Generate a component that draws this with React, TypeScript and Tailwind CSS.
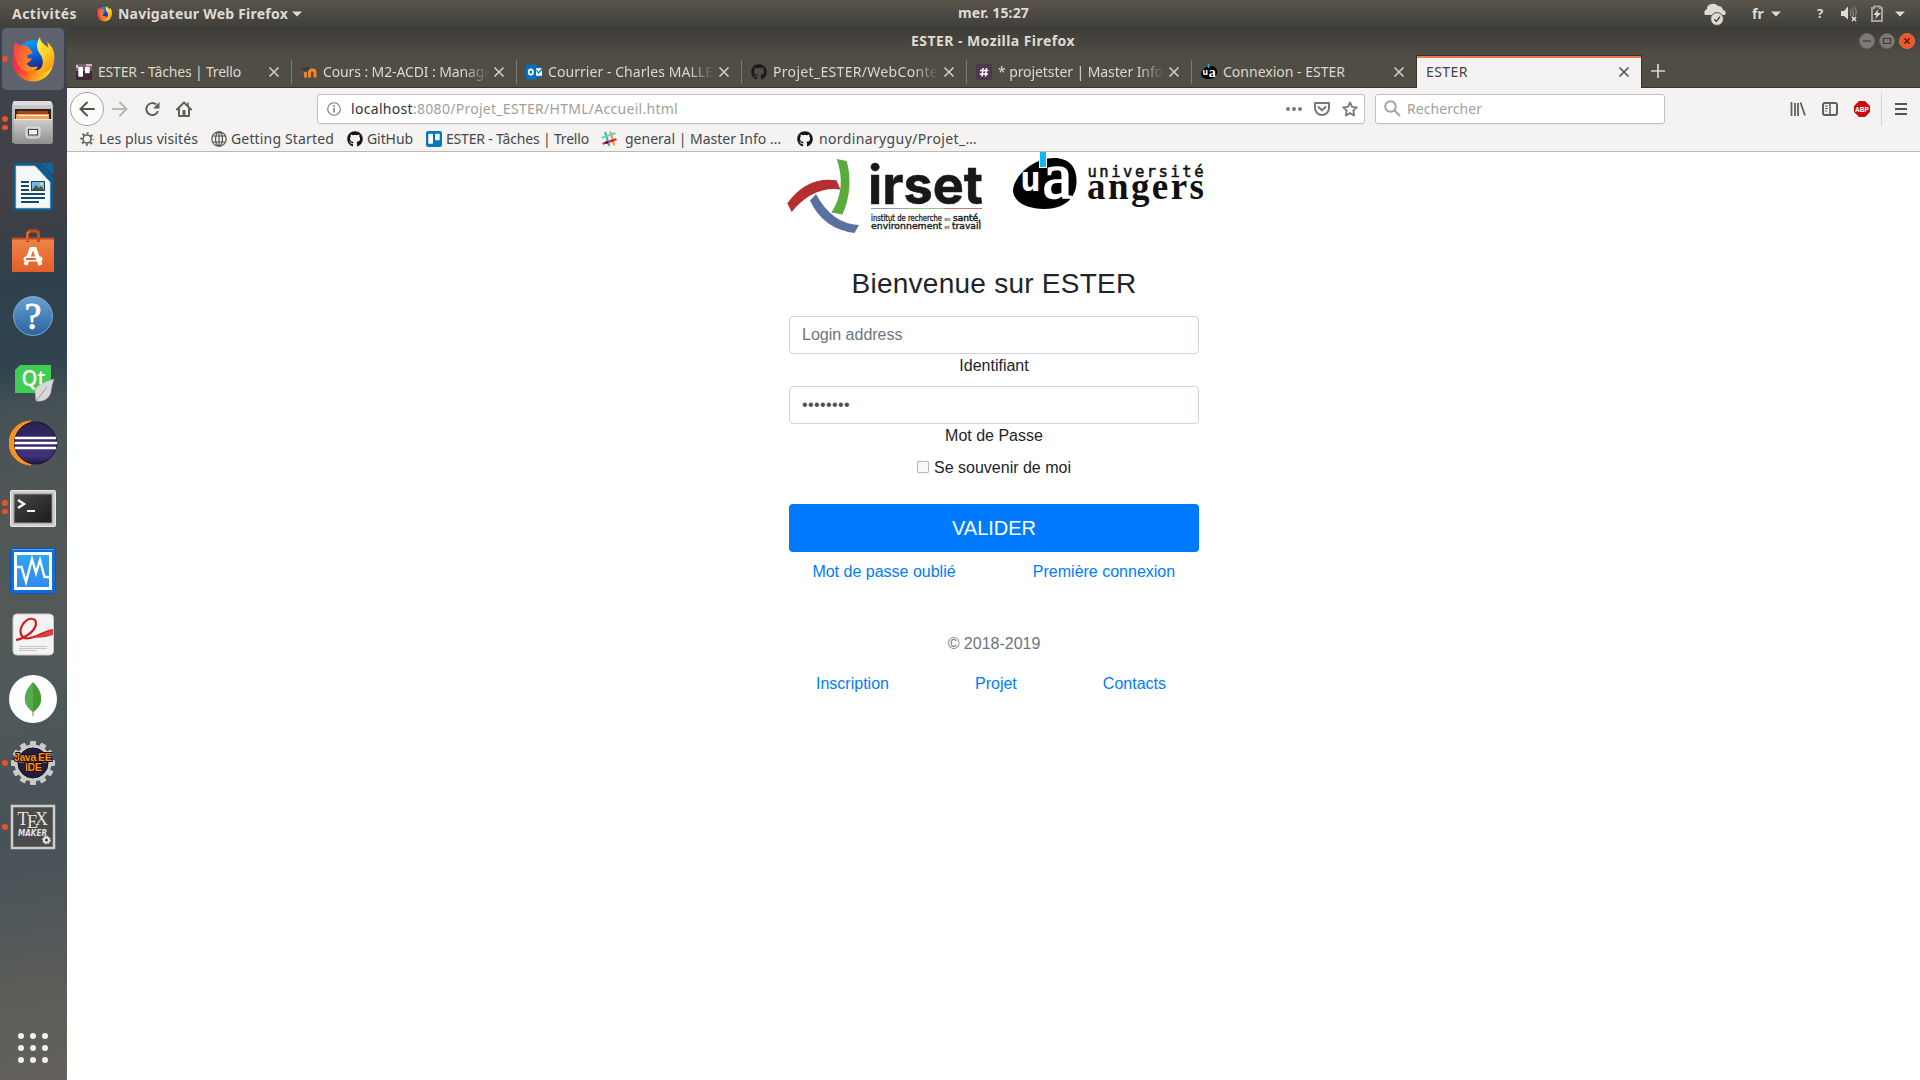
import { useLayoutEffect, useRef, useState, type ReactNode } from "react";
import { FaGithub } from "react-icons/fa";

/** Single line of text whose tracking is adjusted so that it spans `w` pixels. */
function Fit({ w, children, className = "" }: { w: number; children: string; className?: string }) {
  const ref = useRef<HTMLSpanElement>(null);
  const [spacing, setSpacing] = useState(0);
  useLayoutEffect(() => {
    const el = ref.current;
    if (el) setSpacing((w - el.getBoundingClientRect().width) / children.length);
  }, [w, children]);
  return (
    <span ref={ref} className={"inline-block shrink-0 whitespace-pre " + className} style={{ letterSpacing: spacing }}>
      {children}
    </span>
  );
}

function FirefoxLogo({ size }: { size: number }) {
  return (
    <svg width={size} height={size} viewBox="0 0 48 48" className="shrink-0">
      <defs>
        <linearGradient id="fxBody" x1="0" y1="0.2" x2="1" y2="0.7">
          <stop offset="0" stopColor="#f0244f" />
          <stop offset="0.3" stopColor="#fb2f4b" />
          <stop offset="0.6" stopColor="#ff7a1c" />
          <stop offset="1" stopColor="#ffe226" />
        </linearGradient>
        <linearGradient id="fxGlobe" x1="0.3" y1="0" x2="0.6" y2="1">
          <stop offset="0" stopColor="#00a8f4" />
          <stop offset="0.5" stopColor="#0a63e0" />
          <stop offset="1" stopColor="#1b1f7a" />
        </linearGradient>
        <linearGradient id="fxTail" x1="0" y1="0" x2="0.5" y2="1">
          <stop offset="0" stopColor="#fff44f" />
          <stop offset="0.5" stopColor="#ffd62a" />
          <stop offset="1" stopColor="#ff9a16" />
        </linearGradient>
        <linearGradient id="fxHead" x1="0" y1="0" x2="1" y2="0.3">
          <stop offset="0" stopColor="#fb3a44" />
          <stop offset="1" stopColor="#ff9a1c" />
        </linearGradient>
      </defs>
      <circle cx="24" cy="26" r="20.500" fill="url(#fxBody)" />
      <path d="M10 12C15 6 23 4 31 6C39 11 39 25 34 32C29 37 18 37 14 30Z" fill="url(#fxGlobe)" />
      <path d="M7 6C8 10 10 11 13 11C17 10 19 11 20 13L24 18C22 19 19 19 18 21C19 24 21 24 23 23C21 28 18 27 18 29C21 34 26 31 29 32C25 39 14 37 9 30C4 20 3 14 7 6Z" fill="url(#fxHead)" />
      <path d="M31 2C27 8 27 14 31 19C36 26 34 33 28 37C34 40 43 36 45 27C47 17 43 11 38 7C39 10 40 12 39 13C34 9 31 6 31 2Z" fill="url(#fxTail)" />
    </svg>
  );
}

function Caret({ className = "" }: { className?: string }) {
  return (
    <svg width="10" height="6" viewBox="0 0 10 6" className={"shrink-0 " + className}>
      <path d="M0 .5h10L5 5.500z" fill="#dfdbd2" />
    </svg>
  );
}

function TopPanel() {
  return (
    <header className="flex h-[27px] shrink-0 items-center bg-linear-to-b from-[#59554c] to-[#403f3a] text-sm font-bold leading-none text-[#dfdbd2]">
      <div className="flex w-[940px] items-center pl-3">
        <Fit w={65}>Activités</Fit>
        <div className="ml-[19px] flex">
          <FirefoxLogo size={17} />
        </div>
        <Fit w={170} className="ml-[5px]">Navigateur Web Firefox</Fit>
        <Caret className="ml-1" />
      </div>
      <Fit w={71} className="ml-[18px] -translate-y-px">mer. 15:27</Fit>
      <div className="flex flex-1 items-center">
        <svg width="24" height="24" viewBox="0 0 24 24" className="ml-[674px] shrink-0">
          <path d="M2 13a4 4 0 0 1 2-6 6 5 0 0 1 11-3 5 5 0 0 1 5 4 3 3 0 0 1 2 5z" fill="#dfdbd2" />
          <circle cx="14" cy="17" r="6.400" fill="#dfdbd2" stroke="#504d45" strokeWidth="1" />
          <path d="m11.300 17.300 2 2.100 3.700-4.600" fill="none" stroke="#46443e" strokeWidth="1.400" />
        </svg>
        <Fit w={12} className="ml-[25px]">fr</Fit>
        <Caret className="ml-[7px]" />
        <span className="ml-[36px] w-2 text-[13px]">?</span>
        <svg width="18" height="18" viewBox="0 0 18 18" className="ml-[15px] shrink-0">
          <path d="M1 6h3l4-4.500v13L4 11H1z" fill="#dfdbd2" />
          <path d="M10 5q2 3 0 6M12 3.500q3 5 0 9M14 1.500q4 6 1 9" fill="none" stroke="#85827a" strokeWidth="1.300" />
          <path d="m12 12 4 4m0-4-4 4" stroke="#dfdbd2" strokeWidth="1.700" />
        </svg>
        <svg width="14" height="18" viewBox="0 0 14 18" className="ml-[12px] shrink-0">
          <path d="M4 3V1.500h6V3h2v13H2V3z" fill="none" stroke="#a5a299" strokeWidth="2" />
          <path d="M8.500 4 3.500 10h3L5 14l6-6H7.500z" fill="#dfdbd2" />
        </svg>
        <Caret className="ml-[11px]" />
      </div>
    </header>
  );
}

const icon = "h-12 w-12 shrink-0";

function FilesIcon() {
  return (
    <svg viewBox="0 0 48 48" className={icon}>
      <defs>
        <linearGradient id="cab" x1="0" y1="0" x2="0" y2="1">
          <stop offset="0" stopColor="#cfcfcf" />
          <stop offset="1" stopColor="#8e8e8e" />
        </linearGradient>
      </defs>
      <path d="M5 2h36q2 0 3 5v37H3V7q1-5 2-5z" fill="url(#cab)" />
      <path d="M5 2h36l2 4H4z" fill="#dedede" />
      <path d="M6 10h36v10H6z" fill="#292423" />
      <path d="M8 12h31v8H8z" fill="#a84218" />
      <path d="M7 15h33v5H7z" fill="#f0a45a" />
      <path d="M9 16.500h30" stroke="#fff0d8" />
      <path d="M5 20h38v25H5z" fill="url(#cab)" />
      <path d="M5 20.500h38" stroke="#e6e6e6" />
      <rect x="17" y="28" width="14" height="11" rx="2.500" fill="#c5c5c5" stroke="#eee" strokeWidth=".8" />
      <rect x="19.500" y="30.500" width="9" height="5.500" fill="#eee" stroke="#454545" />
    </svg>
  );
}

function WriterIcon() {
  return (
    <svg viewBox="0 0 48 48" className={icon}>
      <path d="M6 0h25l13 14v32q0 2-2 2H6q-2 0-2-2V2q0-2 2-2z" fill="#0c5c90" />
      <path d="M7 3h19l15 16v26H7z" fill="#f7f7f7" stroke="#c5cdd2" strokeWidth=".7" />
      <path d="M32 0h10q2 0 2 2v10z" fill="#0e63a0" />
      <path d="M12 19h8M12 23h8M12 27h8M12 31h24M12 35h24M12 39h18" stroke="#12496f" strokeWidth="2" />
      <path d="M22 18h14v10H22z" fill="#12496f" />
      <path d="M23 19h12v8H23z" fill="#6fb9e6" />
      <path d="m23 27 4-5 3 3 2-2 3 4z" fill="#4b5837" />
      <circle cx="32.500" cy="21" r="1.400" fill="#ffd75a" />
    </svg>
  );
}

function SoftwareIcon() {
  return (
    <svg viewBox="0 0 48 48" className={icon}>
      <defs>
        <linearGradient id="bag" x1="0" y1="0" x2="0" y2="1">
          <stop offset="0" stopColor="#f0844a" />
          <stop offset="1" stopColor="#e35f28" />
        </linearGradient>
      </defs>
      <path d="M3 11h42v34H3z" fill="url(#bag)" />
      <path d="M3 10.500h42v2H3z" fill="#b84e20" />
      <path d="M18.500 15V7q0-3 3-3h5q3 0 3 3v8" fill="none" stroke="#c34c1d" strokeWidth="3" />
      <path d="M18 14V7q0-2 3-2" fill="none" stroke="#ef844c" strokeWidth="1" />
      <path d="M16.500 38 22.300 22h3.400l5.800 16" fill="none" stroke="#fff" strokeWidth="4" />
      <rect x="14.500" y="29.500" width="19" height="5" rx="2.500" fill="#fff" />
      <path d="M17 31h10v2H17z" fill="#e8662b" />
    </svg>
  );
}

function HelpIcon() {
  return (
    <svg viewBox="0 0 48 48" className={icon}>
      <defs>
        <linearGradient id="help" x1="0" y1="0" x2="0" y2="1">
          <stop offset="0" stopColor="#6aa1d2" />
          <stop offset="1" stopColor="#2763a0" />
        </linearGradient>
      </defs>
      <circle cx="24" cy="25" r="19.400" fill="url(#help)" stroke="#7fadd4" />
      <text x="24" y="38" textAnchor="middle" fontFamily="Liberation Serif" fontSize="38" fill="#fff" stroke="#fff" strokeWidth=".8">?</text>
    </svg>
  );
}

function QtIcon() {
  return (
    <svg viewBox="0 0 48 48" className={icon}>
      <path d="M11 10h31v28H6V15z" fill="#41cd52" />
      <text x="12.500" y="31" fontFamily="Open Sans" fontSize="21" fontWeight="600" fill="#fff" textLength="24" lengthAdjust="spacingAndGlyphs">Qt</text>
      <path d="M45 24c-9 3-18 6-19 12l1 10c10 1 14-4 15-10q1-7 3-12z" fill="#d8d8d8" stroke="#b4b4b4" strokeWidth=".5" />
      <path d="m27 46 11-14" stroke="#888" strokeWidth=".8" />
    </svg>
  );
}

function EclipseIcon() {
  return (
    <svg viewBox="0 0 48 48" className={icon}>
      <defs>
        <linearGradient id="ecl" x1="0" y1="0" x2="0" y2="1">
          <stop offset="0" stopColor="#2b2052" />
          <stop offset="0.8" stopColor="#403180" />
          <stop offset="1" stopColor="#201840" />
        </linearGradient>
      </defs>
      <path d="M22 2A22 22 0 0 0 22 46A25 25 0 0 1 22 2z" fill="#f7941e" stroke="#f7941e" />
      <circle cx="26.500" cy="24" r="21" fill="url(#ecl)" stroke="#17112e" strokeWidth="1" />
      <path d="M6 19h41M5.500 24H48M6 29h41" stroke="#fff" strokeWidth="2.400" />
    </svg>
  );
}

function TerminalIcon() {
  return (
    <svg viewBox="0 0 48 48" className={icon}>
      <defs>
        <linearGradient id="term" x1="0" y1="0" x2="1" y2="1">
          <stop offset="0" stopColor="#4a4a4a" />
          <stop offset="0.5" stopColor="#303030" />
          <stop offset="1" stopColor="#1d1d1d" />
        </linearGradient>
      </defs>
      <rect x="1.500" y="7.500" width="45" height="36" rx="1" fill="#cfcfcf" stroke="#e9e9e9" />
      <rect x="5" y="11" width="38" height="29" fill="url(#term)" stroke="#8f8f8f" />
      <path d="m9 17 6 4-6 4" fill="none" stroke="#f4f4f4" strokeWidth="2.500" />
      <path d="M18 28h8" stroke="#f4f4f4" strokeWidth="2" />
    </svg>
  );
}

function MonitorIcon() {
  return (
    <svg viewBox="0 0 48 48" className={icon}>
      <defs>
        <linearGradient id="mon" x1="0" y1="0" x2="0" y2="1">
          <stop offset="0" stopColor="#2ea8f6" />
          <stop offset="1" stopColor="#3388ef" />
        </linearGradient>
      </defs>
      <rect x="1.500" y="1.500" width="45" height="45" rx="3" fill="#0f6edc" stroke="#0b57b5" />
      <path d="M3 2.500h42" stroke="#56a8ff" />
      <rect x="6.500" y="6.500" width="35" height="35" fill="url(#mon)" stroke="#fff" strokeWidth="3" />
      <path d="M8 20h4.500l4.500 15 6-23 4 14 4-13 4.500 17H41" fill="none" stroke="#fff" strokeWidth="2.400" />
    </svg>
  );
}

function PdfIcon() {
  return (
    <svg viewBox="0 0 48 48" className={icon}>
      <rect x="4" y="3" width="40.500" height="41" rx="4" fill="#f3f3f3" stroke="#c9c9c9" />
      <path d="M7 29C14 28 26 21 27 13C27 6 19 6 14 13C9 21 12 29 21 27C30 25 36 20 44 19" fill="none" stroke="#cf1f24" strokeWidth="2.200" />
      <path d="M21 26q13-1 23-8v6q-10 4-23 2z" fill="#d9413c" />
      <path d="M10 35.500h28M10 37.500h28M10 39.500h18" stroke="#c6c6c6" />
    </svg>
  );
}

function MongoIcon() {
  return (
    <svg viewBox="0 0 48 48" className={icon}>
      <circle cx="24" cy="24" r="24" fill="#fff" />
      <path d="M24 33v8" stroke="#b5a887" strokeWidth="1.500" />
      <path d="M24 7C13 18 13 30 24 37z" fill="#58aa50" />
      <path d="M24 7C35 18 35 30 24 37z" fill="#439934" />
    </svg>
  );
}

function JavaIcon() {
  return (
    <svg viewBox="0 0 48 48" className={icon}>
      {[0, 30, 60, 90, 120, 150].map((a) => (
        <rect key={a} x="21" y="2" width="6" height="44" rx="1" fill="#c9c9c9" transform={`rotate(${a} 24 24)`} />
      ))}
      <circle cx="24" cy="24" r="18.500" fill="#c9c9c9" />
      <circle cx="24" cy="24" r="15" fill="#241c44" stroke="#111" />
      <path d="M10 19h28v5H10z" fill="#5f5b70" />
      <g fontFamily="Liberation Sans" fontSize="11" fontWeight="bold" fill="#ff8c1a" stroke="#1a1008" strokeWidth="2" paintOrder="stroke">
        <text x="5" y="22" textLength="38">Java EE</text>
        <text x="16" y="32" textLength="17">IDE</text>
      </g>
    </svg>
  );
}

function TexIcon() {
  return (
    <svg viewBox="0 0 48 48" className={icon}>
      <rect x="3" y="3" width="42" height="42" fill="#4b4b4b" stroke="#cdcdcd" strokeWidth="2.500" />
      <g fontFamily="Liberation Serif" fontSize="18" fill="#e2e2e2">
        <text x="8.500" y="22">T</text>
        <text x="18" y="25">E</text>
        <text x="26" y="22">X</text>
      </g>
      <text x="9" y="32.500" fontFamily="DejaVu Sans" fontSize="8" fontWeight="bold" fontStyle="italic" fill="#e2e2e2" textLength="29" lengthAdjust="spacingAndGlyphs">MAKER</text>
      <circle cx="37.500" cy="37" r="2.600" fill="none" stroke="#e2e2e2" strokeWidth="2" />
      <circle cx="37.500" cy="37" r="3.700" fill="none" stroke="#e2e2e2" strokeWidth="1.200" strokeDasharray="1.500 1.400" />
    </svg>
  );
}

const launchers: { el: ReactNode; dots: number; active?: boolean }[] = [
  { el: <FirefoxLogo size={48} />, dots: 1, active: true },
  { el: <FilesIcon />, dots: 2 },
  { el: <WriterIcon />, dots: 0 },
  { el: <SoftwareIcon />, dots: 0 },
  { el: <HelpIcon />, dots: 0 },
  { el: <QtIcon />, dots: 0 },
  { el: <EclipseIcon />, dots: 0 },
  { el: <TerminalIcon />, dots: 2 },
  { el: <MonitorIcon />, dots: 0 },
  { el: <PdfIcon />, dots: 0 },
  { el: <MongoIcon />, dots: 0 },
  { el: <JavaIcon />, dots: 1 },
  { el: <TexIcon />, dots: 1 },
];

function Dock() {
  return (
    <nav className="flex w-[67px] shrink-0 flex-col bg-[linear-gradient(170deg,#3d424e_0%,#40424a_8%,#434148_14%,#403f45_18%,#32414b_22%,#30434f_32%,#455155_36%,#505656_44%,#535958_55%,#4e5759_65%,#485257_76%,#50575a_84%,#5b5c58_91%,#64615b_100%)]">
      {launchers.map((l, i) => (
        <div key={i} className="flex h-16 shrink-0 items-center">
          <div className={"ml-0.5 flex h-[62px] w-[62px] items-center rounded-[5px] " + (l.active ? "bg-[#5d626d]" : "")}>
            <div className="flex w-[7px] flex-col items-start gap-[3px]">
              {Array.from({ length: l.dots }, (_, d) => (
                <span key={d} className="h-[5.500px] w-[5.500px] rounded-full bg-[#e95420]" />
              ))}
            </div>
            {l.el}
          </div>
        </div>
      ))}
      <div className="mt-auto mb-[17px] ml-[18px] grid w-[30px] grid-cols-3 gap-1.5">
        {Array.from({ length: 9 }, (_, i) => (
          <span key={i} className="h-1.5 w-1.5 rounded-full bg-[#f2f1f0]" />
        ))}
      </div>
    </nav>
  );
}

function TitleBar() {
  return (
    <div className="flex h-7 shrink-0 items-center bg-linear-to-b from-[#3c3b37] to-[#504d45] text-sm font-bold leading-none text-[#dfdbd2]">
      <Fit w={164} className="ml-[844px]">ESTER - Mozilla Firefox</Fit>
      <div className="ml-auto mr-[5px] flex gap-1">
        {["M4 8h8", "M4.500 5.500h7v5h-7z", "m5.500 5.500 5 5m0-5-5 5"].map((d, i) => (
          <svg key={d} width="16" height="16" viewBox="0 0 16 16">
            <circle cx="8" cy="8" r="7.600" fill={i === 2 ? "#e9592b" : "#7c7a73"} stroke={i === 2 ? "#f07a50" : "#6a6861"} strokeWidth=".7" />
            <path d={d} fill="none" stroke={i === 2 ? "#4d1d0b" : "#3d3b36"} strokeWidth={i === 2 ? 1.5 : 1.2} />
          </svg>
        ))}
      </div>
    </div>
  );
}

function TrelloIcon({ dark }: { dark?: boolean }) {
  return (
    <svg width="16" height="16" viewBox="0 0 16 16" className="shrink-0">
      <rect width="16" height="16" rx={dark ? 0.5 : 2.5} fill={dark ? "#7d5c70" : "#0079bf"} />
      {dark && <path d="M0 7h16v9H0z" fill="#3a2836" />}
      {dark && <path d="M0 1h2v3H0zM10 0h6v2h-6z" fill="#d8b4c6" />}
      <rect x="2.300" y="2.800" width="4.700" height="10" rx=".8" fill="#fff" />
      <rect x="9" y="2.800" width="4.700" height="6.500" rx=".8" fill="#fff" />
    </svg>
  );
}

function MoodleIcon() {
  return (
    <svg width="16" height="16" viewBox="0 0 16 16" className="shrink-0">
      <path d="M4.500 13.500V8m4 5.500V8q0-2 2.700-2t2.800 2v5.500" fill="none" stroke="#f28a2a" strokeWidth="2.800" />
      <path d="m0 5 7-2 2 1.500-4 2-4 .5z" fill="#3a3732" />
      <path d="M1 6v4" stroke="#8a5c35" />
    </svg>
  );
}

function OutlookIcon() {
  return (
    <svg width="16" height="16" viewBox="0 0 16 16" className="shrink-0">
      <path d="M0 1.500 10 0v16L0 14.500z" fill="#0072c6" />
      <path d="M10 4h6v8h-6z" fill="#fff" />
      <path d="M10 3.500h6M10 12.500h6M10.500 6l2 3 3.500-4" fill="none" stroke="#0072c6" strokeWidth="1.300" />
      <ellipse cx="4.800" cy="8" rx="2.100" ry="2.700" fill="none" stroke="#fff" strokeWidth="1.700" />
    </svg>
  );
}

function HashIcon() {
  return (
    <svg width="16" height="16" viewBox="0 0 16 16" className="shrink-0">
      <rect width="16" height="16" rx="1" fill="#4d394b" />
      <path d="m7 4-1 8.500M10.500 4l-1 8.500M4 6.500h8.300M3.700 10h8.300" stroke="#fff" strokeWidth="1.500" />
    </svg>
  );
}

function UaBadge() {
  return (
    <svg width="16" height="16" viewBox="0 0 16 16" className="shrink-0">
      <path d="M0 10C0 6 5 2 10 2c4 0 6 2.500 6 6 0 4-3 7-8 7-5 0-8-2-8-5z" fill="#000" />
      <rect x="6.800" width="1.600" height="4" fill="#12b7ea" />
      <text x="1.500" y="11" fontFamily="DejaVu Sans" fontSize="9" fontWeight="bold" fill="#fff" textLength="5.500" lengthAdjust="spacingAndGlyphs">u</text>
      <text x="7.700" y="12.500" fontFamily="Liberation Serif" fontSize="14" fontWeight="bold" fill="#fff">a</text>
    </svg>
  );
}

const tabs: { icon: ReactNode; title: string; w: number; fade?: boolean }[] = [
  { icon: <TrelloIcon dark />, title: "ESTER - Tâches | Trello", w: 143 },
  { icon: <MoodleIcon />, title: "Cours : M2-ACDI : Manage", w: 169, fade: true },
  { icon: <OutlookIcon />, title: "Courrier - Charles MALLE", w: 165, fade: true },
  { icon: <FaGithub className="h-4 w-4 shrink-0 text-[#1b1b1b]" />, title: "Projet_ESTER/WebConte", w: 165, fade: true },
  { icon: <HashIcon />, title: "* projetster | Master Info", w: 165, fade: true },
  { icon: <UaBadge />, title: "Connexion - ESTER", w: 122 },
];

function Cross({ color }: { color: string }) {
  return (
    <svg width="12" height="12" viewBox="0 0 12 12" className="ml-auto shrink-0">
      <path d="m1.500 1.500 9 9m0-9-9 9" stroke={color} strokeWidth="1.600" />
    </svg>
  );
}

function TabStrip() {
  return (
    <div className="flex h-[33px] shrink-0 bg-[#504d45] text-sm leading-none text-[#dcd8cf] shadow-[inset_0_-1px_#35342f]">
      {tabs.map((t, i) => (
        <div
          key={i}
          className={
            "flex shrink-0 items-center pl-[9px] " +
            (i === 5
              ? "w-[224px] pr-[11px]"
              : "w-[225px] bg-[linear-gradient(#7d7a73,#7d7a73)] bg-size-[1px_24px] bg-position-[right_5px] bg-no-repeat pr-3")
          }
        >
          {t.icon}
          <div className={"ml-1.5 flex h-5 w-[166px] items-center overflow-hidden " + (t.fade ? "mask-[linear-gradient(to_right,#000_85%,transparent_100%)]" : "")}>
            <Fit w={t.w}>{t.title}</Fit>
          </div>
          <Cross color="#d0ccc3" />
        </div>
      ))}
      <div className="flex w-[226px] shrink-0 items-center border-x border-t border-[#35342f] bg-[#f4f3f1] pl-[9px] pr-[11px] text-[#3e4347] shadow-[inset_0_2px_#f0764a]">
        <Fit w={42}>ESTER</Fit>
        <Cross color="#55534e" />
      </div>
      <svg width="14" height="14" viewBox="0 0 14 14" className="ml-[9px] mt-[9px]">
        <path d="M7 0v14M0 7h14" stroke="#d8d4cb" strokeWidth="1.700" />
      </svg>
    </div>
  );
}

function Toolbar() {
  const field = "flex h-[30px] shrink-0 items-center rounded-[3px] border border-[#c4c2be] bg-white shadow-[0_1px_2px_rgba(0,0,0,0.06)]";
  return (
    <div className="flex h-[41px] shrink-0 items-center bg-[#f4f3f1] text-[14px] leading-none text-[#a09f9c]">
      <div className="ml-[3px] flex h-[34px] w-[34px] items-center justify-center rounded-full border border-[#a5a39f] bg-[#fcfcfb]">
        <svg width="16" height="16" viewBox="0 0 16 16">
          <path d="M15 8H1.500M8 1.500 1.500 8 8 14.500" fill="none" stroke="#55534f" strokeWidth="2" strokeLinecap="round" />
        </svg>
      </div>
      <svg width="16" height="16" viewBox="0 0 16 16" className="ml-2">
        <path d="M1 8h13.500M8 1.500 14.500 8 8 14.500" fill="none" stroke="#b9b7b3" strokeWidth="2" strokeLinecap="round" />
      </svg>
      <svg width="16" height="16" viewBox="0 0 16 16" className="ml-4">
        <path d="M12.300 3.600A6 6 0 1 0 14 10" fill="none" stroke="#615f5b" strokeWidth="2" />
        <path d="M15.500 1v6.500H9z" fill="#615f5b" />
      </svg>
      <svg width="16" height="16" viewBox="0 0 16 16" className="ml-4">
        <path d="M1 8.500 8 1.500l7 7M3 8v7h10V8" fill="none" stroke="#615f5b" strokeWidth="2" strokeLinejoin="round" strokeLinecap="round" />
        <path d="M6.500 9h3v6h-3z" fill="#615f5b" />
        <path d="M12 1.500v4" stroke="#615f5b" strokeWidth="1.500" />
      </svg>
      <div className={field + " ml-[125px] w-[1048px]"}>
        <svg width="14" height="14" viewBox="0 0 14 14" className="ml-[9px] shrink-0">
          <circle cx="7" cy="7" r="6.300" fill="none" stroke="#7c7a76" strokeWidth="1.100" />
          <path d="M7 6v4.500M7 3.200v1.700" stroke="#7c7a76" strokeWidth="1.500" />
        </svg>
        <div className="ml-[10px] flex">
          <Fit w={62} className="text-[#2e3436]">localhost</Fit>
          <Fit w={265}>:8080/Projet_ESTER/HTML/Accueil.html</Fit>
        </div>
        <svg width="16" height="6" viewBox="0 0 16 6" className="ml-auto shrink-0" fill="#7b7975">
          <circle cx="2" cy="3" r="2" />
          <circle cx="8" cy="3" r="2" />
          <circle cx="14" cy="3" r="2" />
        </svg>
        <svg width="16" height="14" viewBox="0 0 16 14" className="ml-3 shrink-0" fill="none" stroke="#7b7975" strokeWidth="2">
          <path d="M1 1h14v5a7 7 0 0 1-14 0z" strokeLinejoin="round" />
          <path d="m4.500 5 3.500 3.300L11.500 5" strokeLinecap="round" />
        </svg>
        <svg width="16" height="16" viewBox="0 0 16 16" className="ml-3 mr-[6px] shrink-0">
          <path d="m8 1.500 2 4.300 4.800.6-3.500 3.200.9 4.900L8 12.100l-4.200 2.400.9-4.900L1.200 6.400 6 5.800z" fill="none" stroke="#7b7975" strokeWidth="1.800" strokeLinejoin="round" />
        </svg>
      </div>
      <div className={field + " ml-[10px] w-[290px]"}>
        <svg width="17" height="17" viewBox="0 0 17 17" className="ml-2 shrink-0">
          <circle cx="6.500" cy="6.500" r="5.300" fill="none" stroke="#a5a3a0" strokeWidth="1.900" />
          <path d="m10.500 10.500 5.500 5.500" stroke="#a5a3a0" strokeWidth="2" />
        </svg>
        <Fit w={75} className="ml-[6px]">Rechercher</Fit>
      </div>
      <svg width="16" height="16" viewBox="0 0 16 16" className="ml-[125px]">
        <path d="M1.500 1v14M5 2v13M8 2v13M10.500 1.500l4.500 13" fill="none" stroke="#615f5b" strokeWidth="1.800" />
      </svg>
      <svg width="16" height="16" viewBox="0 0 16 16" className="ml-4" fill="none" stroke="#615f5b">
        <rect x="1" y="2" width="14" height="12" rx="2" strokeWidth="2" />
        <path d="M8 2v12" strokeWidth="1.500" />
        <path d="M3 5h3M3 7.500h3M3 10h2" strokeWidth="1" />
      </svg>
      <svg width="16" height="16" viewBox="0 0 16 16" className="ml-4">
        <path d="M5 0h6l5 5v6l-5 5H5l-5-5V5z" fill="#c90c0c" />
        <text x="1" y="11" fontFamily="Liberation Sans" fontSize="8" fontWeight="bold" fill="#fff" textLength="14" lengthAdjust="spacingAndGlyphs">ABP</text>
      </svg>
      <div className="ml-[11px] h-[34px] w-px bg-[#d7d5d2]" />
      <div className="ml-[13px] flex w-3 flex-col gap-[3px]">
        <span className="h-0.5 bg-[#55534f]" />
        <span className="h-0.5 bg-[#55534f]" />
        <span className="h-0.5 bg-[#55534f]" />
      </div>
    </div>
  );
}

function Bookmarks() {
  return (
    <div className="flex h-[23px] shrink-0 items-start border-b border-[#bbb9b5] bg-[#f4f3f1] text-[14px] leading-none text-[#45484a]">
      <div className="flex h-5 items-center">
        <svg width="14" height="14" viewBox="0 0 14 14" className="ml-[13px]">
          <circle cx="7" cy="7" r="4" fill="none" stroke="#615f5b" strokeWidth="1.600" />
          <circle cx="7" cy="7" r="5.700" fill="none" stroke="#615f5b" strokeWidth="2.200" strokeDasharray="1.900 2.577" strokeDashoffset="1" />
        </svg>
        <Fit w={99} className="ml-[5px]">Les plus visités</Fit>
        <svg width="16" height="16" viewBox="0 0 16 16" className="ml-[13px]" fill="none" stroke="#55534f" strokeWidth="1.200">
          <circle cx="8" cy="8" r="7.200" />
          <ellipse cx="8" cy="8" rx="3.500" ry="7.200" />
          <path d="M1.500 5h13M1.500 11h13M8 1v14" />
        </svg>
        <Fit w={103} className="ml-1">Getting Started</Fit>
        <FaGithub className="ml-[13px] h-4 w-4 text-[#161514]" />
        <Fit w={46} className="ml-1">GitHub</Fit>
        <div className="ml-[13px]"><TrelloIcon /></div>
        <Fit w={143} className="ml-1">ESTER - Tâches | Trello</Fit>
        <svg width="16" height="16" viewBox="0 0 16 16" className="ml-[12px]" strokeWidth="2.300" strokeLinecap="round">
          <path d="m4.500 2 3.500 12" stroke="#3eb991" />
          <path d="m9.500 1.500 3.500 12" stroke="#e9a820" />
          <path d="m1.500 6.500 12-4" stroke="#6fcadc" />
          <path d="m2.500 12.500 12-4" stroke="#e01765" />
          <path d="m5.200 11.700.8-.3" stroke="#2b1c2b" />
          <path d="m10.500 10 .8-.3" stroke="#d0261f" />
        </svg>
        <Fit w={156} className="ml-2">general | Master Info …</Fit>
        <FaGithub className="ml-[16px] h-4 w-4 text-[#161514]" />
        <Fit w={158} className="ml-[6px]">nordinaryguy/Projet_…</Fit>
      </div>
    </div>
  );
}

function IrsetLogo() {
  return (
    <svg width="196" height="82" viewBox="0 0 196 82" className="shrink-0">
      <path d="M49.700 7 59.700 9Q67 36 55.500 62.500L44.500 60.500Q60 36 49.700 7z" fill="#5aab3b" />
      <path d="M.3 51.300Q20 24 49.500 28.300L53.500 37.500Q26 34 4.700 60z" fill="#b52f31" />
      <path d="M23 48.500 29 42Q45 72 72 73L67.500 81Q36 77 23 48.500z" fill="#58719f" />
      <g fontFamily="Inter, sans-serif">
        <text transform="translate(81 51.500) scale(1 .94)" fontSize="57" fontWeight="bold" fill="#181818" textLength="115" lengthAdjust="spacingAndGlyphs" stroke="#181818" strokeWidth=".6">irset</text>
      </g>
      <g fontFamily="DejaVu Sans" fill="#222" stroke="#222">
        <text x="84" y="68.500" fontSize="8" textLength="71" lengthAdjust="spacingAndGlyphs" strokeWidth=".3">institut de recherche</text>
        <text x="157.500" y="68.500" fontSize="5" textLength="6" lengthAdjust="spacingAndGlyphs" strokeWidth=".1">en</text>
        <text x="166" y="68.500" fontSize="9.500" textLength="28" lengthAdjust="spacingAndGlyphs" strokeWidth=".5">santé,</text>
        <text x="84" y="77" fontSize="9.500" textLength="71" lengthAdjust="spacingAndGlyphs" strokeWidth=".4">environnement</text>
        <text x="157.500" y="77" fontSize="5" textLength="5" lengthAdjust="spacingAndGlyphs" strokeWidth=".1">et</text>
        <text x="165" y="77" fontSize="9.500" textLength="29" lengthAdjust="spacingAndGlyphs" strokeWidth=".4">travail</text>
      </g>
      <path d="M84 56.500h37" stroke="#8c9cc0" />
      <path d="M121 56.500h37" stroke="#8fc67c" />
      <path d="M158 56.500h37" stroke="#d07070" />
    </svg>
  );
}

function AngersLogo() {
  return (
    <svg width="192" height="60" viewBox="0 0 192 60" className="shrink-0">
      <path d="M0 38C1 24 20 6 41 6c15 0 22.500 9 22.500 23 0 17-12 28-32 28C12 57 0 49 0 38z" fill="#000" />
      <rect x="26" width="8" height="16" fill="#fff" />
      <rect x="27" width="6" height="15" fill="#12b7f0" />
      <text x="7" y="38.500" fontFamily="DejaVu Sans Mono" fontSize="33" fontWeight="bold" fill="#fff" textLength="21" lengthAdjust="spacingAndGlyphs">u</text>
      <text x="29.500" y="46" fontFamily="Liberation Serif" fontSize="66" fill="#fff" stroke="#fff" strokeWidth="1.500" textLength="30" lengthAdjust="spacingAndGlyphs">a</text>
      <text x="74.500" y="25" fontFamily="DejaVu Sans Mono" fontSize="15.500" fill="#111" stroke="#111" strokeWidth=".5" textLength="116">université</text>
      <text x="74" y="46.500" fontFamily="Liberation Serif" fontSize="37" fontWeight="bold" fill="#111" textLength="117">angers</text>
    </svg>
  );
}

function LoginPage() {
  const link = "text-[#007bff]";
  const input = "block h-[38px] w-full rounded-[4px] border border-[#ced4da] bg-white px-3 leading-6 outline-none";
  return (
    <main className="flex flex-1 flex-col items-center bg-white pl-px font-['Liberation_Sans',Arial,sans-serif] text-base leading-6 text-[#212529]">
      <div className="flex h-[82px] w-[414px] gap-[30px]">
        <IrsetLogo />
        <AngersLogo />
      </div>
      <form className="flex w-[410px] flex-col items-center" onSubmit={(e) => e.preventDefault()}>
        <h1 className="mt-[33px] h-[34px] text-[28px] leading-[34px]">
          <Fit w={285}>Bienvenue sur ESTER</Fit>
        </h1>
        <input className={input + " mt-[15px] text-[#495057] placeholder:text-[#6c757d]"} placeholder="Login address" />
        <label>Identifiant</label>
        <div className={input + " mt-2 flex items-center text-[#495057]"}>
          <Fit w={48}>••••••••</Fit>
        </div>
        <label>Mot de Passe</label>
        <label className="mt-2 flex items-center">
          <span className="mr-[5px] -mt-[3px] h-3 w-3 rounded-[2px] border border-[#b9b9b9] bg-[#f8f8f8] shadow-[0_0_1px_#aaa]" />
          Se souvenir de moi
        </label>
        <button className="mt-6 h-12 w-full rounded-[4px] bg-[#007bff] text-xl text-white">VALIDER</button>
        <div className="mt-2 flex w-[440px]">
          <a className={link + " w-1/2 text-center"}>Mot de passe oublié</a>
          <a className={link + " w-1/2 text-center"}>Première connexion</a>
        </div>
        <p className="mt-12 text-[#6c757d]">© 2018-2019</p>
        <div className="mt-4 flex w-[350px] justify-between self-start ml-[27px]">
          <a className={link}>Inscription</a>
          <a className={link}>Projet</a>
          <a className={link}>Contacts</a>
        </div>
      </form>
    </main>
  );
}

export default function App() {
  return (
    <div className="flex h-[1080px] w-[1920px] flex-col overflow-hidden bg-white font-['Noto_Sans',sans-serif]">
      <TopPanel />
      <div className="flex min-h-0 flex-1">
        <Dock />
        <div className="flex min-w-0 flex-1 flex-col">
          <TitleBar />
          <TabStrip />
          <Toolbar />
          <Bookmarks />
          <LoginPage />
        </div>
      </div>
    </div>
  );
}
